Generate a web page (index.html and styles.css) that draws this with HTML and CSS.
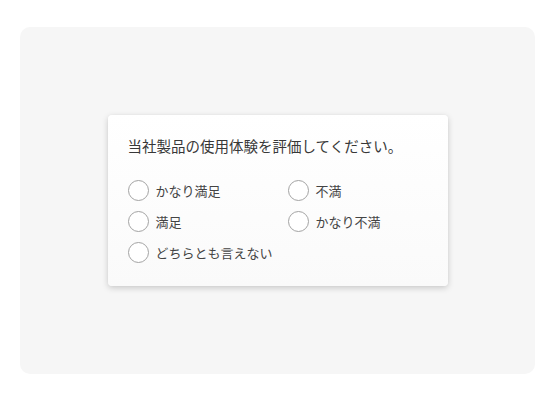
FILE: index.html
```html
<!DOCTYPE html>
<html lang="ja">
<head>
<meta charset="utf-8">
<link rel="stylesheet" href="styles.css">
</head>
<body>
<div class="panel">
  <div class="card">
    <p class="question">当社製品の使用体験を評価してください。</p>
    <div class="options">
      <label class="option"><span class="radio"></span><span class="label">かなり満足</span></label>
      <label class="option"><span class="radio"></span><span class="label">不満</span></label>
      <label class="option"><span class="radio"></span><span class="label">満足</span></label>
      <label class="option"><span class="radio"></span><span class="label">かなり不満</span></label>
      <label class="option"><span class="radio"></span><span class="label">どちらとも言えない</span></label>
    </div>
  </div>
</div>
</body>
</html>
```
FILE: styles.css
```css
html, body {
  margin: 0;
  padding: 0;
  background: #ffffff;
}
body {
  font-family: "Noto Sans CJK JP", "Noto Sans", sans-serif;
  padding: 27px 22px 26px 20px;
}
.panel {
  height: 347px;
  background: #f6f6f6;
  border-radius: 10px;
  display: flex;
  align-items: center;
  justify-content: center;
}
.card {
  width: 340px;
  height: 171px;
  box-sizing: border-box;
  padding: 21px 20px 20px 20px;
  background: linear-gradient(#ffffff, #fafafa);
  border-radius: 4px;
  box-shadow: 0 2px 6px rgba(0, 0, 0, 0.18), 0 0 1px rgba(0, 0, 0, 0.08);
}
.question {
  margin: 0;
  font-size: 14.5px;
  line-height: 20px;
  color: #383838;
}
.options {
  margin-top: 24px;
  display: grid;
  grid-template-columns: 160px 160px;
  row-gap: 10px;
}
.option {
  display: flex;
  align-items: center;
  gap: 7px;
  height: 21px;
}
.radio {
  width: 19px;
  height: 19px;
  border: 1px solid #a3a3a3;
  border-radius: 50%;
  background: #ffffff;
  flex: none;
}
.label {
  font-size: 13px;
  line-height: 21px;
  color: #444444;
}
```
